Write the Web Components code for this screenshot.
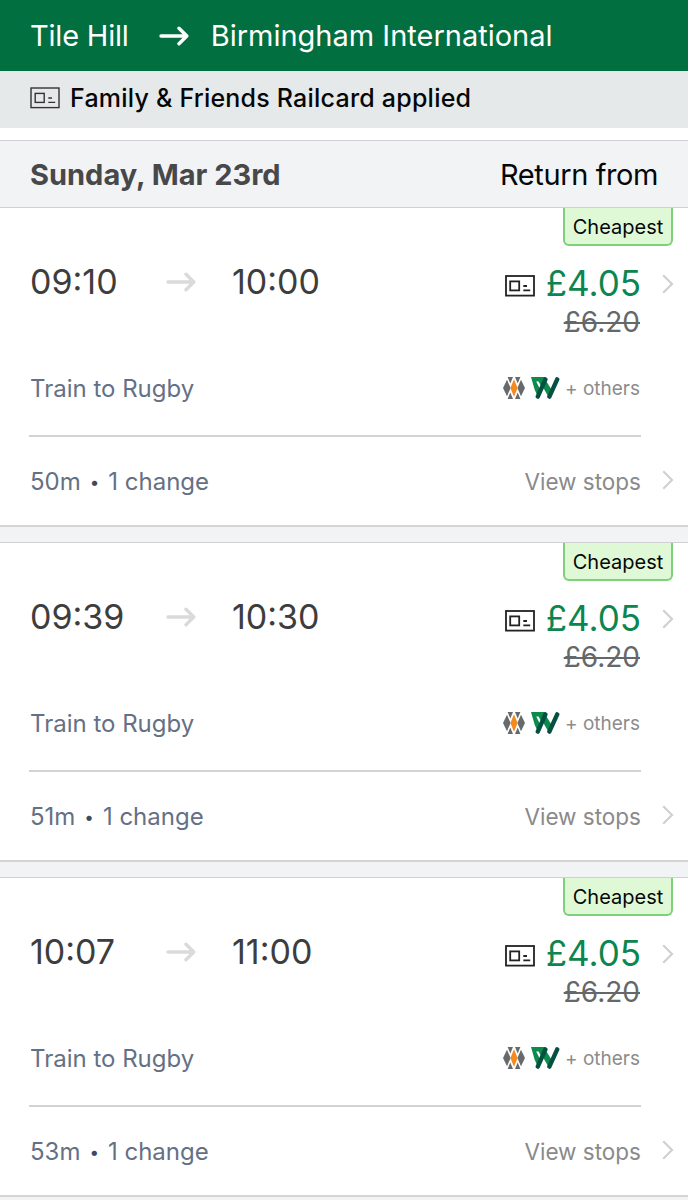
<!DOCTYPE html>
<html lang="en">
<head>
<meta charset="utf-8">
<title>Train times</title>
<style>
    body {
        margin: 0;
        background: #fff;
        font-family: Inter, "Liberation Sans", sans-serif;
        color: #050708;
        overflow: hidden;
    }
</style>
</head>
<body>
<journey-header>
    <span slot="from">Tile Hill</span>
    <span slot="to">Birmingham International</span>
</journey-header>
<railcard-banner>Family &amp; Friends Railcard applied</railcard-banner>
<date-bar>
    Sunday, Mar 23rd
    <span slot="side">Return from</span>
</date-bar>
<journey-card depart="09:10" arrive="10:00" duration="50m"></journey-card>
<journey-card depart="09:39" arrive="10:30" duration="51m"></journey-card>
<journey-card depart="10:07" arrive="11:00" duration="53m"></journey-card>

<script>
function makeTemplate(html) {
    const template = document.createElement('template')
    template.innerHTML = html
    return template
}

class BaseElement extends HTMLElement {
    constructor() {
        super();
        this._shadowRoot = this.attachShadow( {mode: 'open'} )
        this._shadowRoot.appendChild(this.constructor.template.content.cloneNode(true))
    }
}

class ArrowIcon extends BaseElement {
    static template = makeTemplate(`
        <style>
            :host { display: block; width: 30px; height: 20px; }
            svg { display: block; }
        </style>
        <svg width="30" height="20" viewBox="0 0 30 20" fill="none" stroke="currentColor"
            stroke-width="3.4" stroke-linecap="round" stroke-linejoin="round">
            <path d="M2 10H27.6M20 2.2L27.8 10L20 17.8"/>
        </svg>
    `)
}

class ChevronIcon extends BaseElement {
    static template = makeTemplate(`
        <style>
            :host { display: block; width: 12px; height: 20px; color: #d0d0d0; }
            svg { display: block; }
        </style>
        <svg width="12" height="20" viewBox="0 0 12 20" fill="none" stroke="currentColor" stroke-width="2.2">
            <path d="M1.2 1.2L10 10L1.2 18.8"/>
        </svg>
    `)
}

class RailcardIcon extends BaseElement {
    static template = makeTemplate(`
        <style>
            :host { display: block; width: 30px; height: 22px; }
            svg { display: block; }
        </style>
        <svg width="30" height="22" viewBox="0 0 30 22" fill="none" stroke="currentColor" stroke-width="var(--stroke, 1.8)">
            <rect x="1" y="1" width="28" height="19.6"/>
            <rect x="5.2" y="6.4" width="9" height="9"/>
            <path d="M18.3 11H22M18.3 15.4H25.2"/>
        </svg>
    `)
}

class OperatorLogos extends BaseElement {
    static template = makeTemplate(`
        <style>
            :host { display: flex; align-items: center; gap: 6px; }
            svg { display: block; }
        </style>
        <svg width="22" height="22" viewBox="0 0 22 22">
            <g fill="#666a6d">
                <path d="M0 11L4 2.8L7.6 11L4 19.2Z"/>
                <path d="M22 11L18 2.8L14.4 11L18 19.2Z"/>
                <path d="M4.6 0H10L7.3 6.6Z"/>
                <path d="M12 0H17.4L14.7 6.6Z"/>
                <path d="M4.6 22H10L7.3 15.4Z"/>
                <path d="M12 22H17.4L14.7 15.4Z"/>
            </g>
            <path d="M11 2.2L14.6 11L11 19.8L7.4 11Z" fill="#f58a1f"/>
        </svg>
        <svg width="29" height="22" viewBox="0 0 29 22">
            <path d="M0 0H14L10 9L7.6 4.4H5.2L9 12L7 20L3.6 12.5Z" fill="#0b8c4d"/>
            <path d="M15.4 4.4L21.4 14L17.6 20L11.8 10Z" fill="#0b8c4d"/>
            <g stroke="#064f43" stroke-width="4.4" stroke-linecap="round">
                <path d="M14.4 2.4L6.8 19.6"/>
                <path d="M26.2 2.4L18.4 19.6"/>
            </g>
        </svg>
    `)
}

class JourneyHeader extends BaseElement {
    static template = makeTemplate(`
        <style>
            :host {
                display: flex;
                align-items: center;
                height: 71px;
                padding-left: 30px;
                background: #016f40;
                color: #fff;
                font-size: 29px;
                white-space: nowrap;
            }
            arrow-icon { margin: 0 22px 0 30px; }
            .from { letter-spacing: -.2px; }
        </style>
        <div class="from"><slot name="from"></slot></div>
        <arrow-icon></arrow-icon>
        <div class="to"><slot name="to"></slot></div>
    `)
}

class RailcardBanner extends BaseElement {
    static template = makeTemplate(`
        <style>
            :host {
                display: flex;
                align-items: center;
                gap: 10px;
                box-sizing: border-box;
                height: 57px;
                padding: 0 30px 3px;
                background: #e5e9ea;
                font-size: 25px;
                font-weight: 500;
                letter-spacing: .22px;
                white-space: nowrap;
            }
            railcard-icon { color: #333; --stroke: 1.4; }
        </style>
        <railcard-icon></railcard-icon>
        <div><slot></slot></div>
    `)
}

class DateBar extends BaseElement {
    static template = makeTemplate(`
        <style>
            :host {
                display: flex;
                align-items: center;
                justify-content: space-between;
                box-sizing: border-box;
                height: 67px;
                margin-top: 12px;
                padding: 0 30px;
                border-top: 1px solid #cfd0d3;
                background: #f2f3f5;
                font-size: 29px;
                white-space: nowrap;
            }
            .date { font-weight: 700; color: #47484a; }
            .side { letter-spacing: -.4px; }
        </style>
        <div class="date"><slot></slot></div>
        <div class="side"><slot name="side"></slot></div>
    `)
}

class JourneyCard extends BaseElement {
    static template = makeTemplate(`
        <style>
            :host {
                display: flex;
                flex-direction: column;
                box-sizing: border-box;
                height: 335px;
                border-top: 1px solid #cfd0d2;
                border-bottom: 15px solid #f2f3f5;
                white-space: nowrap;
            }
            .body {
                flex: 1;
                display: flex;
                flex-direction: column;
                border-bottom: 2px solid #d3d4d5;
            }
            .badge {
                align-self: flex-end;
                box-sizing: border-box;
                width: 110px;
                height: 38px;
                margin-right: 15px;
                border: 2px solid #7fd07a;
                border-top: 0;
                border-radius: 0 0 6px 6px;
                background: #dff9d6;
                line-height: 38px;
                font-size: 20px;
                text-align: center;
            }
            .row {
                display: flex;
                align-items: center;
                padding: 0 14px 0 30px;
            }
            .times { height: 40px; margin-top: 17px; font-size: 34px; color: #3d3d3d; }
            .depart { width: 136px; }
            .depart, .arrive, .times arrow-icon { padding-bottom: 3px; }
            arrow-icon { width: 66px; color: #dadada; }
            .arrive { flex: 1; }
            .times railcard-icon { margin: 6px 11px 0 0; color: #222; }
            .times chevron-icon { padding-top: 2px; }
            .price { font-size: 35px; color: #0b8650; }
            chevron-icon { margin-left: 21px; }
            .was {
                height: 36px;
                padding-top: 1px;
                line-height: 36px;
                margin-right: 48px;
                font-size: 28px;
                color: #65686b;
                text-align: right;
            }
            .was s { text-decoration-thickness: 2px; }
            .route { height: 36px; margin-top: 30px; padding-right: 48px; }
            .info { flex: 1; font-size: 24px; color: #657085; }
            .others { margin-left: 5px; font-size: 19px; color: #8c8c8c; }
            .divider { height: 2px; margin: 29px 47px 0 29px; background: #d2d3d3; }
            .foot { flex: 1; }
            .foot chevron-icon { padding-bottom: 2px; }
            .dot { display: inline-block; width: 14px; text-align: center; font-size: 17px; vertical-align: 2px; color: #3f4960; }
            .view { font-size: 22.5px; color: #8a8a8a; }
        </style>
        <div class="body">
            <div class="badge">Cheapest</div>
            <div class="row times">
                <div class="depart"></div>
                <arrow-icon></arrow-icon>
                <div class="arrive"></div>
                <railcard-icon></railcard-icon>
                <div class="price">£4.05</div>
                <chevron-icon></chevron-icon>
            </div>
            <div class="was"><s>£6.20</s></div>
            <div class="row route">
                <div class="info">Train to Rugby</div>
                <operator-logos></operator-logos>
                <div class="others">+ others</div>
            </div>
            <div class="divider"></div>
            <div class="row foot">
                <div class="info"><span class="duration"></span> <span class="dot">•</span> 1 change</div>
                <div class="view">View stops</div>
                <chevron-icon></chevron-icon>
            </div>
        </div>
    `)

    connectedCallback() {
        for (const name of ['depart', 'arrive', 'duration']) {
            this._shadowRoot.querySelector('.' + name).textContent = this.getAttribute(name)
        }
    }
}

customElements.define('arrow-icon', ArrowIcon);
customElements.define('chevron-icon', ChevronIcon);
customElements.define('railcard-icon', RailcardIcon);
customElements.define('operator-logos', OperatorLogos);
customElements.define('journey-header', JourneyHeader);
customElements.define('railcard-banner', RailcardBanner);
customElements.define('date-bar', DateBar);
customElements.define('journey-card', JourneyCard);
</script>
</body>
</html>
